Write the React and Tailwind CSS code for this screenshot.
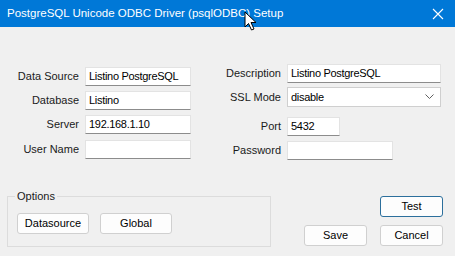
import React from 'react'

const font = { fontFamily: '"Liberation Sans", Arial, sans-serif' }

function TextBox({ value, w }) {
  return (
    <div className={`h-[19px] ${w} bg-white border border-[#e3e3e3] border-b-[#8c8c8c] pl-[3px] text-[11px] leading-[17px] tracking-[-0.3px] text-black whitespace-nowrap overflow-hidden`}>
      {value}
    </div>
  )
}

function Button({ label, w = 'w-[63px]', primary = false }) {
  return (
    <div
      className={`h-[21px] ${w} flex items-center justify-center rounded-[3px] bg-[#fdfdfd] text-[11px] text-black border ${
        primary ? 'border-[#2c6f9c]' : 'border-[#d0d0d0]'
      }`}
    >
      {label}
    </div>
  )
}

function Row({ label, labelW, children, className = '' }) {
  return (
    <div className={`flex items-center ${className}`}>
      <div className={`${labelW} text-right text-[11px] text-[#1a1a1a] pr-[6px] whitespace-nowrap`}>{label}</div>
      {children}
    </div>
  )
}

function Cursor() {
  return (
    <svg className="absolute left-[244px] top-[11px]" width="14" height="21" viewBox="0 0 14 21">
      <path
        d="M1 1 L1 16 L4.5 12.5 L7.5 19 L10 18 L7 11.5 L12 11.5 Z"
        fill="#fff"
        stroke="#000"
        strokeWidth="1"
        strokeLinejoin="miter"
      />
    </svg>
  )
}

export default function App() {
  return (
    <div className="relative w-[455px] h-[256px] bg-[#f0f0f0] overflow-hidden flex flex-col" style={font}>
      {/* title bar */}
      <div className="h-[27px] bg-[#0078d7] flex items-center justify-between pl-[7px] pr-[8px] text-white">
        <span className="text-[11.5px]">PostgreSQL Unicode ODBC Driver (psqlODBC) Setup</span>
        <svg width="12" height="12" viewBox="0 0 12 12" className="mr-[3px]">
          <path d="M1 1 L11 11 M11 1 L1 11" stroke="#fff" strokeWidth="1.1" />
        </svg>
      </div>
      <Cursor />

      {/* fields */}
      <div className="flex">
        <div className="w-[220px] pt-[40px] flex flex-col gap-[5px]">
          <Row label="Data Source" labelW="w-[85px]">
            <TextBox value="Listino PostgreSQL" w="w-[106px]" />
          </Row>
          <Row label="Database" labelW="w-[85px]">
            <TextBox value="Listino" w="w-[106px]" />
          </Row>
          <Row label="Server" labelW="w-[85px]">
            <TextBox value="192.168.1.10" w="w-[106px]" />
          </Row>
          <Row label="User Name" labelW="w-[85px]" className="mt-[1px]">
            <TextBox value="" w="w-[106px]" />
          </Row>
        </div>
        <div className="flex-1 pt-[37px] flex flex-col">
          <Row label="Description" labelW="w-[67px]">
            <TextBox value="Listino PostgreSQL" w="w-[154px]" />
          </Row>
          <Row label="SSL Mode" labelW="w-[67px]" className="mt-[4px]">
            <div className="h-[20px] w-[154px] bg-white border border-[#cfcfcf] flex items-center justify-between pl-[3px] pr-[6px] text-[11px] tracking-[-0.3px] text-black">
              <span>disable</span>
              <svg width="9" height="6" viewBox="0 0 9 6">
                <path d="M0.5 0.5 L4.5 4.5 L8.5 0.5" fill="none" stroke="#606060" strokeWidth="1" />
              </svg>
            </div>
          </Row>
          <Row label="Port" labelW="w-[67px]" className="mt-[10px]">
            <TextBox value="5432" w="w-[53px]" />
          </Row>
          <Row label="Password" labelW="w-[67px]" className="mt-[5px]">
            <TextBox value="" w="w-[106px]" />
          </Row>
        </div>
      </div>

      {/* bottom */}
      <div className="flex mt-[29px]">
        <fieldset className="ml-[7px] w-[264px] h-[58px] border border-[#dcdcdc] px-[9px]">
          <legend className="ml-[-2px] px-[2px] text-[11px] leading-[14px] text-[#1a1a1a]">Options</legend>
          <div className="flex gap-[11px] mt-[10px]">
            <Button label="Datasource" w="w-[72px]" />
            <Button label="Global" w="w-[72px]" />
          </div>
        </fieldset>
        <div className="ml-[33px] mt-[7px] flex flex-col items-end">
          <Button label="Test" primary />
          <div className="flex gap-[13px] mt-[8px]">
            <Button label="Save" />
            <Button label="Cancel" />
          </div>
        </div>
      </div>
    </div>
  )
}
